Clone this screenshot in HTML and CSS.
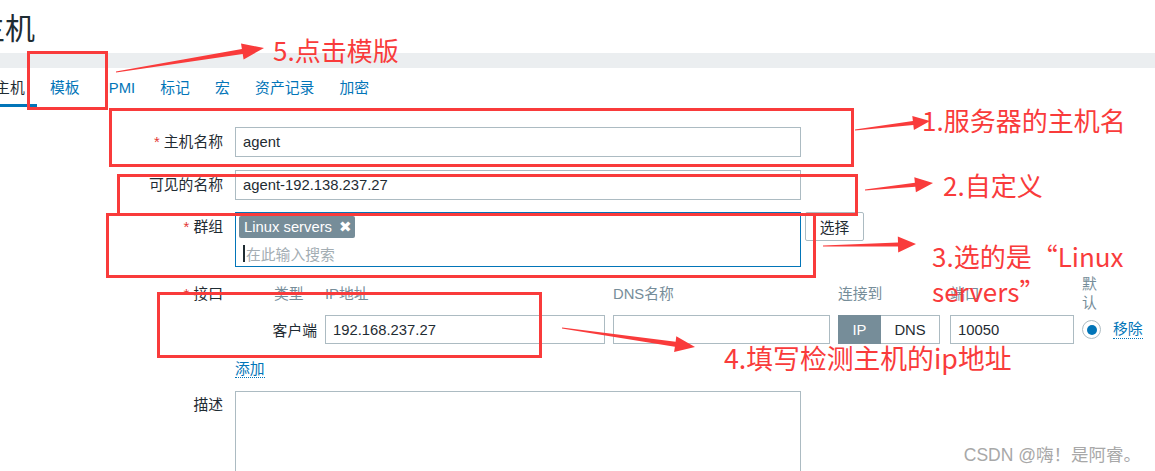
FILE: index.html
```html
<!DOCTYPE html>
<html lang="zh">
<head>
    <meta charset="UTF-8">
    <title>主机</title>
    <link rel="stylesheet" href="styles.css">
</head>
<body>
    <div class="page">
        <h1 class="page_title">主机</h1>
        <div class="band"></div>
        <ul class="tabs">
            <li class="active">主机</li>
            <li>模板</li>
            <li>IPMI</li>
            <li>标记</li>
            <li>宏</li>
            <li>资产记录</li>
            <li>加密</li>
        </ul>

        <form class="form">
            <div class="row row_name">
                <label class="label"><span class="req">*</span> 主机名称</label>
                <div class="field"><input class="input" type="text" value="agent"></div>
            </div>
            <div class="row row_visible">
                <label class="label">可见的名称</label>
                <div class="field"><input class="input" type="text" value="agent-192.138.237.27"></div>
            </div>
            <div class="row row_groups">
                <label class="label"><span class="req">*</span> 群组</label>
                <div class="field field_inline">
                    <div class="multiselect">
                        <span class="tag">Linux servers <span class="tag_remove">&#10006;</span></span>
                        <div class="search"><span class="caret"></span>在此输入搜索</div>
                    </div>
                    <button class="btn" type="button">选择</button>
                </div>
            </div>
            <div class="row row_iface">
                <label class="label label_iface"><span class="req">*</span> 接口</label>
                <div class="iface">
                    <div class="iface_head iface_type_head">类型</div>
                    <div class="iface_head">IP地址</div>
                    <div class="iface_head">DNS名称</div>
                    <div class="iface_head">连接到</div>
                    <div class="iface_head">端口</div>
                    <div class="iface_head">默认</div>
                    <div></div>

                    <div class="iface_type">客户端</div>
                    <input class="input input_cell" type="text" value="192.168.237.27">
                    <input class="input input_cell" type="text" value="">
                    <div class="toggle">
                        <span class="toggle_on">IP</span>
                        <span class="toggle_off">DNS</span>
                    </div>
                    <input class="input input_cell" type="text" value="10050">
                    <span class="radio"><span class="radio_dot"></span></span>
                    <a class="link">移除</a>
                </div>
            </div>
            <div class="row row_add">
                <span></span>
                <div class="field"><a class="link">添加</a></div>
            </div>
            <div class="row row_desc">
                <label class="label label_desc">描述</label>
                <div class="field"><textarea class="input textarea"></textarea></div>
            </div>
        </form>

        <!-- annotations drawn over the screenshot -->
        <div class="notes">
            <div class="mark mark_tab"></div>
            <div class="mark mark_name"></div>
            <div class="mark mark_visible"></div>
            <div class="mark mark_groups"></div>
            <div class="mark mark_iface"></div>
            <svg class="arrows" width="1155" height="471" viewBox="0 0 1155 471">
                <polygon points="116.1,72.5 242.7,54 243.6,59.4 264,48 241,43.6 241.9,49 115.9,71.5"/>
                <polygon points="855.1,130.5 913.3,125 913.9,130 930,121 912.3,116 912.9,121 854.9,129.5"/>
                <polygon points="865,190.5 915.3,186.8 915.9,192.3 933,183 914.3,177.3 914.9,182.8 865,189.5"/>
                <polygon points="823,246.5 898,246.4 898.2,252.4 916,244 897.8,236.4 898,242.4 823,245.5"/>
                <polygon points="561.9,328.5 674.9,346.7 674.1,352.1 695,347 676.3,336.3 675.6,341.7 562.1,327.5"/>
            </svg>
            <div class="note note_tab">5.点击模版</div>
            <div class="note note_name">1.服务器的主机名</div>
            <div class="note note_visible">2.自定义</div>
            <div class="note note_groups">3.选的是“Linux<br>servers”</div>
            <div class="note note_iface">4.填写检测主机的ip地址</div>
            <div class="watermark">CSDN @嗨！是阿睿。</div>
        </div>
    </div>
</body>
</html>
```

FILE: styles.css
```css
:root {
    --text: #1f2c33;
    --muted: #768d99;
    --border: #acbbc2;
    --blue: #0275b8;
    --red: #f93b3b;
}
body {
    margin: 0;
    width: 1155px;
    height: 471px;
    overflow: hidden;
    background: #fff;
    color: var(--text);
    font-family: "Liberation Sans", Arial, "Noto Sans CJK SC", sans-serif;
    font-size: 14.8px;
}
.page {
    position: relative;
    height: 100%;
}

/* Header */
.page_title {
    margin: 0 0 0 -25px;
    height: 53px;
    line-height: 58px;
    font-size: 30px;
    font-weight: normal;
}
.band {
    height: 15px;
    background: #ebeef0;
}
.tabs {
    list-style: none;
    display: flex;
    height: 39px;
    margin: 0 0 0 -17.5px;
    padding: 0;
}
.tabs li {
    padding: 4px 12.6px 0;
    line-height: 32px;
    color: var(--blue);
    border-bottom: 3px solid transparent;
}
.tabs li.active {
    color: var(--text);
    border-bottom-color: var(--blue);
}

/* Form */
.form {
    padding-top: 20px;
}
.row {
    display: grid;
    grid-template-columns: 223px 1fr;
    column-gap: 12px;
    margin-bottom: 13px;
}
.row_visible {
    margin-bottom: 12px;
}
.row_groups {
    margin-bottom: 8px;
}
.row_add {
    margin-bottom: 10px;
}
.label {
    text-align: right;
    line-height: 30px;
    white-space: nowrap;
}
.label_iface {
    line-height: 38px;
}
.label_desc {
    padding-top: 5px;
    line-height: 18px;
}
.req {
    color: #e33734;
}
.field_inline {
    display: flex;
    align-items: flex-start;
    gap: 4px;
}
.input {
    display: block;
    box-sizing: border-box;
    width: 566px;
    height: 30px;
    margin: 0;
    padding: 0 7px;
    border: 1px solid var(--border);
    border-radius: 0;
    background: #fff;
    color: var(--text);
    font: inherit;
    outline: none;
}
.textarea {
    height: 120px;
    resize: none;
}

/* Group multiselect */
.multiselect {
    box-sizing: border-box;
    width: 566px;
    height: 55px;
    padding: 3px;
    border: 1px solid var(--blue);
}
.tag {
    display: inline-flex;
    align-items: center;
    gap: 7px;
    height: 22px;
    padding: 0 3px 0 5px;
    border-radius: 2px;
    background: var(--muted);
    color: #fff;
}
.tag_remove {
    font-family: "DejaVu Sans", sans-serif;
    font-size: 15px;
    font-weight: bold;
}
.search {
    display: flex;
    align-items: center;
    height: 22px;
    margin-top: 4px;
    padding-left: 4px;
    color: #a3adb3;
}
.caret {
    width: 2px;
    height: 17px;
    margin-right: 1px;
    background: var(--text);
}
.btn {
    box-sizing: border-box;
    width: 59px;
    height: 29px;
    padding: 0;
    border: 1px solid var(--border);
    border-radius: 2px;
    background: #fff;
    color: var(--text);
    font: inherit;
}

/* Interfaces */
.iface {
    display: grid;
    grid-template-columns: 82px 280px 217px 104px 124px 23px auto;
    column-gap: 8px;
    row-gap: 2px;
    align-items: center;
}
.iface_head {
    color: var(--muted);
    line-height: 19px;
}
.iface_type_head {
    padding-left: 39px;
}
.iface_type {
    text-align: right;
}
.input_cell {
    width: 100%;
    height: 29px;
}
.toggle {
    display: flex;
    width: 102px;
    height: 29px;
}
.toggle span {
    display: flex;
    align-items: center;
    justify-content: center;
    box-sizing: border-box;
}
.toggle_on {
    width: 43px;
    background: var(--muted);
    color: #fff;
}
.toggle_off {
    flex: 1;
    border: 1px solid var(--border);
    border-left: none;
}
.radio {
    display: flex;
    align-items: center;
    justify-content: center;
    box-sizing: border-box;
    width: 19px;
    height: 19px;
    border: 1px solid var(--border);
    border-radius: 50%;
}
.radio_dot {
    width: 10px;
    height: 10px;
    border-radius: 50%;
    background: var(--blue);
}
.link {
    justify-self: start;
    color: var(--blue);
    border-bottom: 1px dotted var(--blue);
    line-height: 18px;
}
.row_add .field {
    line-height: 24px;
}

/* Annotations */
.notes {
    position: absolute;
    inset: 0;
    pointer-events: none;
}
.mark {
    position: absolute;
    box-sizing: border-box;
    border: 3px solid var(--red);
}
.mark_tab { left: 27px; top: 51px; width: 81px; height: 59px; }
.mark_name { left: 109px; top: 108px; width: 745px; height: 59px; }
.mark_visible { left: 117px; top: 174px; width: 741px; height: 42px; }
.mark_groups { left: 106px; top: 213px; width: 710px; height: 65px; }
.mark_iface { left: 157px; top: 292px; width: 385px; height: 66px; }
.arrows {
    position: absolute;
    left: 0;
    top: 0;
    fill: var(--red);
}
.note {
    position: absolute;
    color: var(--red);
    font-family: "Noto Sans CJK SC", "Noto Sans", sans-serif;
    font-size: 26px;
    line-height: 30px;
    white-space: nowrap;
}
.note_tab { left: 273px; top: 35px; }
.note_name { left: 922px; top: 105px; }
.note_visible { left: 943px; top: 170px; }
.note_groups { left: 932px; top: 238px; line-height: 35px; }
.note_iface { left: 724px; top: 343px; font-size: 26.8px; }
.watermark {
    position: absolute;
    right: 14px;
    top: 441px;
    color: #a8a8a8;
    font-size: 17.5px;
    text-shadow: 0 0 1px #fff;
}
```
